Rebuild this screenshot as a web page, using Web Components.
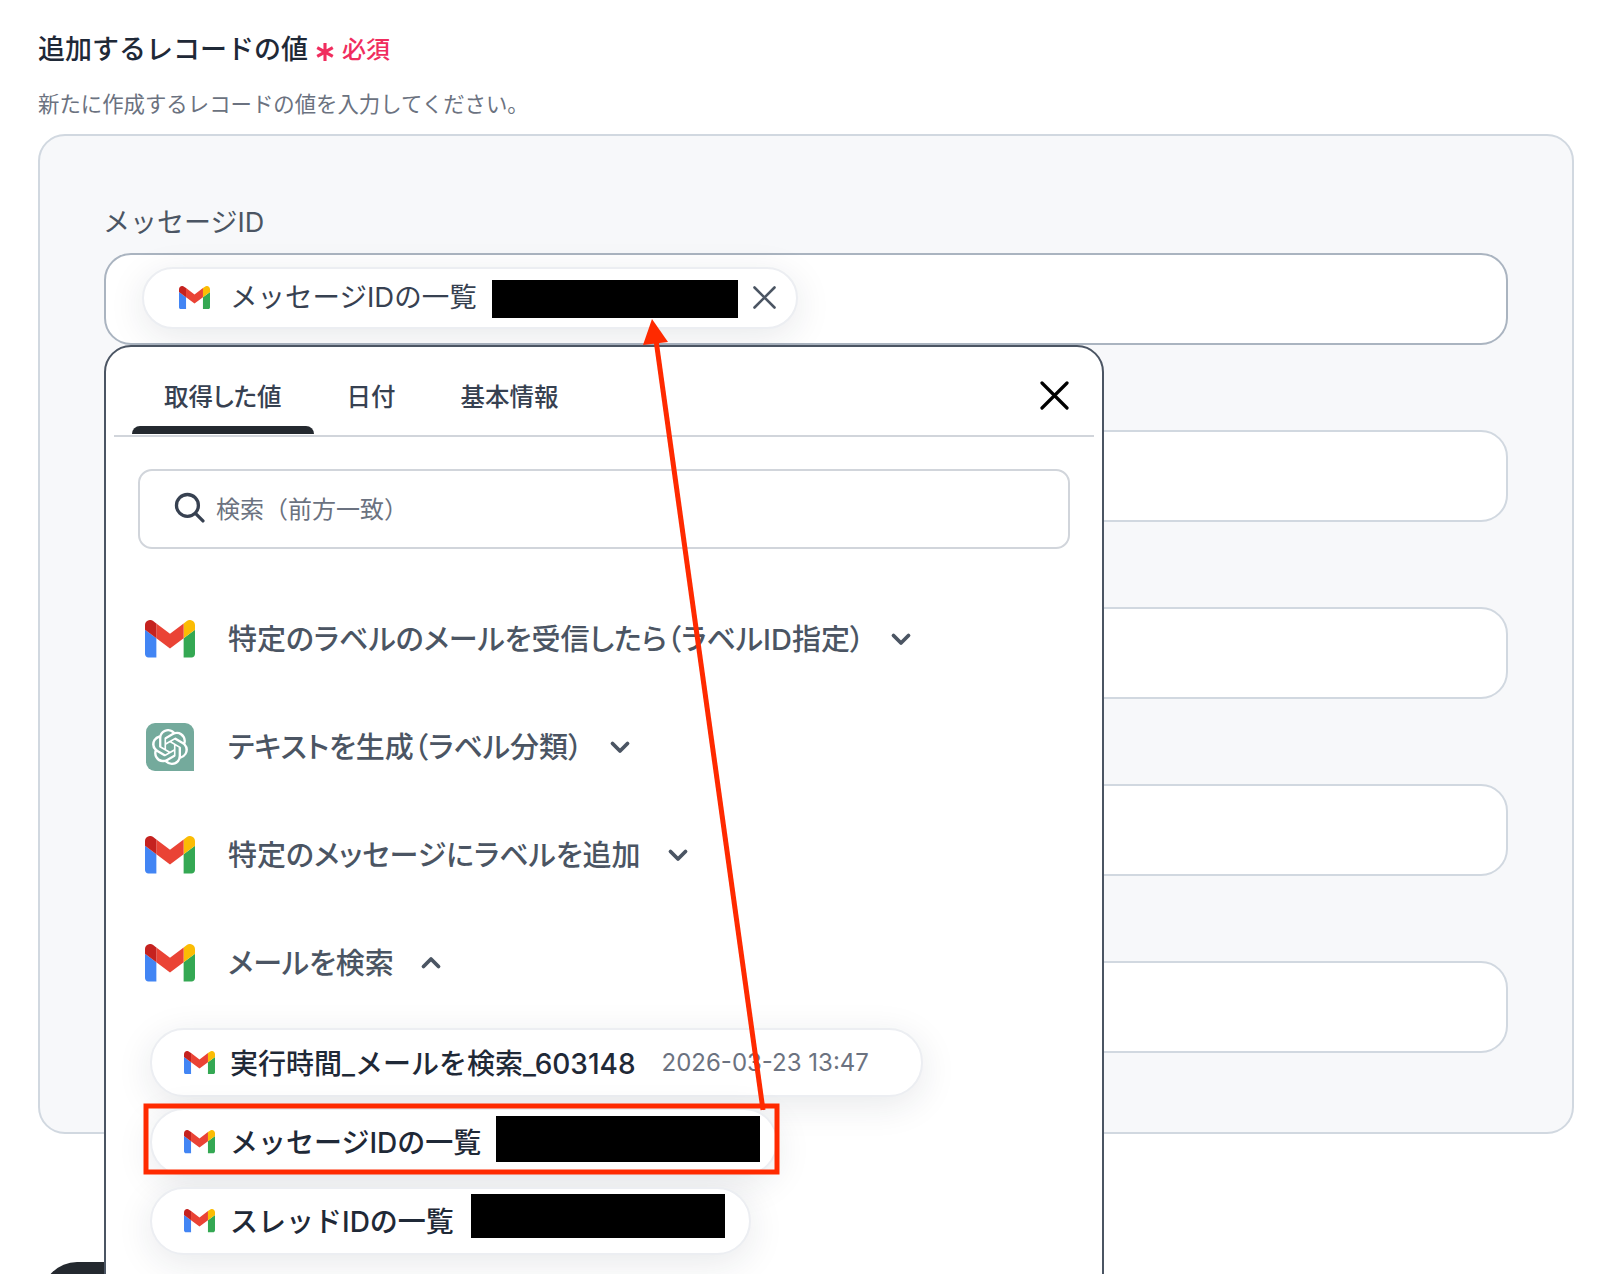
<!DOCTYPE html>
<html lang="ja">
<head>
<meta charset="utf-8">
<title>追加するレコードの値</title>
<style>
  html, body { margin: 0; background: #fff; }
  body { font-family: Inter, "Noto Sans CJK JP", sans-serif; overflow: hidden; }
</style>
</head>
<body>

<template id="gmail-icon">
  <style>
    :host { display: block; width: var(--w, 32px); flex: none; }
    svg { display: block; width: 100%; height: auto; }
  </style>
  <svg viewBox="52 42 88 66">
    <path fill="#4285f4" d="M58 108h14V74L52 59v43c0 3.32 2.69 6 6 6"/>
    <path fill="#34a853" d="M120 108h14c3.32 0 6-2.69 6-6V59l-20 15"/>
    <path fill="#fbbc04" d="M120 48v26l20-15v-8c0-7.42-8.47-11.65-14.4-7.2"/>
    <path fill="#ea4335" d="M72 74V48l24 18 24-18v26L96 92"/>
    <path fill="#c5221f" d="M52 51v8l20 15V48l-5.6-4.2c-5.94-4.45-14.4-.22-14.4 7.2"/>
  </svg>
</template>

<template id="openai-icon">
  <style>
    :host { display: flex; width: 50px; flex: none; justify-content: center; }
    .box {
      width: 48px; height: 48px; background: #74aa9c;
      border-radius: 9px 9px 0 9px;
      display: flex; align-items: center; justify-content: center;
    }
    svg { display: block; width: 36px; height: 36px; }
  </style>
  <div class="box">
    <svg viewBox="0 0 24 24"><path fill="#fff" d="M22.2819 9.8211a5.9847 5.9847 0 0 0-.5157-4.9108 6.0462 6.0462 0 0 0-6.5098-2.9A6.0651 6.0651 0 0 0 4.9807 4.1818a5.9847 5.9847 0 0 0-3.9977 2.9 6.0462 6.0462 0 0 0 .7427 7.0966 5.98 5.98 0 0 0 .511 4.9107 6.051 6.051 0 0 0 6.5146 2.9001A5.9847 5.9847 0 0 0 13.2599 24a6.0557 6.0557 0 0 0 5.7718-4.2058 5.9894 5.9894 0 0 0 3.9977-2.9001 6.0557 6.0557 0 0 0-.7475-7.0729zm-9.022 12.6081a4.4755 4.4755 0 0 1-2.8764-1.0408l.1419-.0804 4.7783-2.7582a.7948.7948 0 0 0 .3927-.6813v-6.7369l2.02 1.1686a.071.071 0 0 1 .038.052v5.5826a4.504 4.504 0 0 1-4.4945 4.4944zm-9.6607-4.1254a4.4708 4.4708 0 0 1-.5346-3.0137l.142.0852 4.783 2.7582a.7712.7712 0 0 0 .7806 0l5.8428-3.3685v2.3324a.0804.0804 0 0 1-.0332.0615L9.74 19.9502a4.4992 4.4992 0 0 1-6.1408-1.6464zM2.3408 7.8956a4.485 4.485 0 0 1 2.3655-1.9728V11.6a.7664.7664 0 0 0 .3879.6765l5.8144 3.3543-2.0201 1.1685a.0757.0757 0 0 1-.071 0l-4.8303-2.7865A4.504 4.504 0 0 1 2.3408 7.872zm16.5963 3.8558L13.1038 8.364 15.1192 7.2a.0757.0757 0 0 1 .071 0l4.8303 2.7913a4.4944 4.4944 0 0 1-.6765 8.1042v-5.6772a.79.79 0 0 0-.407-.667zm2.0107-3.0231l-.142-.0852-4.7735-2.7818a.7759.7759 0 0 0-.7854 0L9.409 9.2297V6.8974a.0662.0662 0 0 1 .0284-.0615l4.8303-2.7866a4.4992 4.4992 0 0 1 6.6802 4.66zM8.3065 12.863l-2.02-1.1638a.0804.0804 0 0 1-.038-.0567V6.0742a4.4992 4.4992 0 0 1 7.3757-3.4537l-.142.0805L8.704 5.459a.7948.7948 0 0 0-.3927.6813zm1.0976-2.3654l2.602-1.4998 2.6069 1.4998v2.9994l-2.5974 1.4997-2.6067-1.4997Z"/></svg>
  </div>
</template>

<template id="value-chip">
  <style>
    :host {
      display: flex; align-items: center; width: max-content;
      box-sizing: border-box; height: var(--h, 68px);
      padding: 0 var(--pr, 24px) 0 var(--pl, 32px);
      background: #fff; border: 2px solid #eceef2; border-radius: 34px;
      box-shadow: 0 8px 36px rgba(31, 41, 55, .1);
      font-size: 28px; font-weight: 500; color: #1f2937; white-space: nowrap;
    }
    .label { margin-left: var(--gap, 15px); line-height: 36px; position: relative; top: var(--ty, 1px); }
    ::slotted(*) { margin-left: var(--tail-gap, 15px); }
  </style>
  <gmail-icon style="--w:31px"></gmail-icon>
  <span class="label"></span>
  <slot></slot>
</template>

<template id="form-field">
  <style>
    :host { display: block; }
    .label { height: 28px; margin-bottom: 17px; font-size: 27px; line-height: 28px; color: #4b5563; position: relative; top: 1px; left: -1px; }
    .box {
      box-sizing: border-box; height: 92px; padding: 0 0 3px 36px;
      display: flex; align-items: center;
      background: #fff; border: 2px solid #d1d8e0; border-radius: 27px;
    }
    :host([active]) .box { border-color: #aab4c0; }
  </style>
  <div class="label"></div>
  <div class="box"><slot></slot></div>
</template>

<template id="step-row">
  <style>
    :host {
      display: flex; align-items: center; height: 108px; padding-left: 39px;
      font-size: 29px; font-weight: 500; color: #4b5563; white-space: nowrap;
      font-feature-settings: "palt";
    }
    .label { margin-left: 33px; position: relative; top: -2px; }
    svg { display: block; width: 24px; height: 16px; margin-left: 25px; fill: none; stroke: #4b5563; stroke-width: 3.8; stroke-linecap: round; stroke-linejoin: round; }
  </style>
  <slot></slot>
  <span class="label"></span>
  <svg viewBox="0 0 24 16"><path d="M4.5 4.5 12 12l7.5-7.5"/></svg>
</template>

<template id="var-popup">
  <style>
    :host {
      position: absolute; left: 104px; top: 345px;
      box-sizing: border-box; width: 1000px; height: 1000px;
      background: #fff; border: 2px solid #4b5563; border-radius: 27px 27px 0 0;
    }
    .strip {
      display: flex; margin: 0 8px; padding: 0 0 1px 18px;
      border-bottom: 2px solid #d1d5db; position: relative;
    }
    .tab {
      padding: 35px 32px 0; margin-right: 1px;
      font-size: 24.5px; line-height: 30px; font-weight: 500; color: #374151;
      font-feature-settings: "palt";
    }
    .tab::after { content: ""; display: block; height: 8px; margin: 14px -32px 0; border-radius: 8px 8px 0 0; }
    .tab.on::after { background: #24292f; }
    .close { margin: 34px 25px 0 auto; width: 29px; height: 29px; display: block; }
    .search {
      box-sizing: border-box; height: 80px; margin: 32px 32px 36px;
      display: flex; align-items: center; padding: 0 0 3px 34px; gap: 11px;
      border: 2px solid #d1d5db; border-radius: 14px;
      font-size: 24px; color: #6b7280;
    }
    .search svg { width: 31px; height: 31px; display: block; fill: none; stroke: #374151; stroke-width: 3.2; stroke-linecap: round; }
    .chips { display: flex; flex-direction: column; gap: 11px; margin: 11px 0 0 44px; }
  </style>
  <div class="strip">
    <div class="tab on">取得した値</div>
    <div class="tab">日付</div>
    <div class="tab">基本情報</div>
    <svg class="close" viewBox="0 0 29 29"><path d="M2 2l25 25M27 2 2 27" stroke="#000" stroke-width="3.2" stroke-linecap="round"/></svg>
  </div>
  <div class="search">
    <svg viewBox="0 0 30 30"><circle cx="13" cy="13" r="10.6"/><path d="m21 21 7 7"/></svg>
    <span>検索（前方一致）</span>
  </div>
  <slot name="steps"></slot>
  <div class="chips"><slot name="chips"></slot></div>
</template>

<template id="record-form">
  <style>
    :host { display: block; position: relative; height: 1274px; overflow: hidden; box-sizing: border-box; padding: 32px 42px 0 38px; color: #1f2937; }
    h2 { margin: 0; display: flex; align-items: center; height: 36px; font-size: 27px; line-height: 36px; font-weight: 500; }
    .req { display: flex; align-items: center; margin-left: 7px; color: #f02d5e; font-size: 24px; font-weight: 500; position: relative; top: 0; }
    .req svg { width: 20px; height: 20px; margin: 4px 7px 0 0; display: block; }
    p { margin: 22px 0 16px; font-size: 21.4px; line-height: 28px; color: #6b7280; }
    .card {
      box-sizing: border-box; height: 1000px; padding: 72px 64px 0;
      display: flex; flex-direction: column; gap: 40px;
      background: #f7f8fa; border: 2px solid #d1d8e0; border-radius: 27px;
    }
    .action { width: 320px; height: 70px; margin: 128px 0 0 4px; background: #24292f; border-radius: 35px; }
  </style>
  <h2>追加するレコードの値<span class="req"><svg viewBox="0 0 18 18"><path d="M9 1v16M2 5l14 8M16 5 2 13" stroke="#f02d5e" stroke-width="2.8"/></svg>必須</span></h2>
  <p>新たに作成するレコードの値を入力してください。</p>
  <div class="card"><slot name="fields"></slot></div>
  <div class="action"></div>
  <slot></slot>
</template>

<template id="mark-up">
  <style>
    :host { position: absolute; left: 0; top: 0; width: 1616px; height: 1274px; pointer-events: none; }
    svg { display: block; }
  </style>
  <svg width="1616" height="1274" viewBox="0 0 1616 1274">
    <rect x="146" y="1106" width="631" height="66" fill="none" stroke="#ff2a00" stroke-width="5"/>
    <path d="M763 1110 656 340" fill="none" stroke="#ff2a00" stroke-width="5"/>
    <path d="M652 319 668 342 643 345Z" fill="#ff2a00"/>
  </svg>
</template>

<record-form>
  <form-field slot="fields" active label="メッセージID">
    <value-chip text="メッセージIDの一覧" style="--h:62px;--pr:20px;--pl:35px;--gap:20px;--ty:-1px;font-size:27.5px;font-weight:400;color:#374151">
      <div style="width:246px;height:38px;background:#000;margin:3px 15px 0 15px"></div>
      <svg width="23" height="23" viewBox="0 0 23 23" style="display:block;margin-left:0"><path d="M1.5 1.5l20 20M21.500 1.500l-20 20" stroke="#4b5563" stroke-width="2.6" stroke-linecap="round"/></svg>
    </value-chip>
  </form-field>
  <form-field slot="fields"></form-field>
  <form-field slot="fields"></form-field>
  <form-field slot="fields"></form-field>
  <form-field slot="fields"></form-field>

  <var-popup>
    <step-row slot="steps" label="特定のラベルのメールを受信したら（ラベルID指定）"><gmail-icon style="--w:50px"></gmail-icon></step-row>
    <step-row slot="steps" label="テキストを生成（ラベル分類）"><openai-icon></openai-icon></step-row>
    <step-row slot="steps" label="特定のメッセージにラベルを追加"><gmail-icon style="--w:50px"></gmail-icon></step-row>
    <step-row slot="steps" label="メールを検索" open><gmail-icon style="--w:50px"></gmail-icon></step-row>

    <value-chip slot="chips" text="実行時間_メールを検索_603148" style="--pr:52px;--h:69px">
      <span style="font-size:24px;font-weight:400;color:#6b7280;--tail-gap:26px">2026-03-23 13:47</span>
    </value-chip>
    <value-chip slot="chips" text="メッセージIDの一覧" style="--pr:16px">
      <div style="width:264px;height:46px;background:#000;margin-bottom:6px"></div>
    </value-chip>
    <value-chip slot="chips" text="スレッドIDの一覧" style="--pr:24px;--tail-gap:17px">
      <div style="width:254px;height:44px;background:#000;margin-bottom:10px"></div>
    </value-chip>
  </var-popup>

  <mark-up></mark-up>
</record-form>

<script>
  // stamps the template with the same id as the tag into an open shadow root
  class Base extends HTMLElement {
    constructor() {
      super();
      let content = document.getElementById(this.localName).content.cloneNode(true);
      this.attachShadow({mode: 'open'}).append(content);
    }
    connectedCallback() {
      let node = this.shadowRoot.querySelector('.label');
      if (node) node.textContent = this.getAttribute('label') || this.getAttribute('text') || '';
    }
  }

  class StepRow extends Base {
    connectedCallback() {
      super.connectedCallback();
      if (this.hasAttribute('open'))
        this.shadowRoot.querySelector('svg path').setAttribute('d', 'M4.5 11.500 12 4l7.5 7.500');
    }
  }

  for (let tag of ['gmail-icon', 'openai-icon', 'value-chip', 'form-field', 'var-popup', 'record-form', 'mark-up'])
    customElements.define(tag, class extends Base {});
  customElements.define('step-row', StepRow);
</script>
</body>
</html>
